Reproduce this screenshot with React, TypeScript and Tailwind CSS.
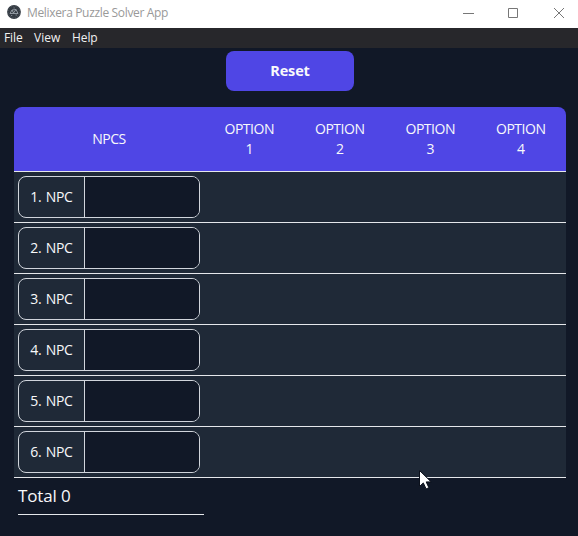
const npcs = [1, 2, 3, 4, 5, 6];
const options = [1, 2, 3, 4];
const columns = "grid grid-cols-[190px_repeat(4,90.5px)]";

function AppIcon() {
  return (
    <svg width="14" height="14" viewBox="0 0 14 14">
      <circle cx="7" cy="7" r="6.9" fill="#343b43" />
      <path d="M3 8.5 5 5l1.5 3L9 4.5l2 4M5 5l4-.5M3 8.5h8M4.2 10.5h1M8.6 10h1.2M6.6 3h1" fill="none" stroke="#a7afb8" strokeWidth=".8" />
      <circle cx="7" cy="7" r="5.9" fill="none" stroke="#68717a" strokeWidth=".6" strokeDasharray="1 1.4" />
    </svg>
  );
}

function TitleBar() {
  return (
    <header className="flex h-7 items-center bg-white pl-[7px] text-[#999]">
      <div className="mb-[4px]"><AppIcon /></div>
      <span className="mb-[3px] ml-[6px] grow text-[12px] tracking-[-0.34px] whitespace-nowrap">Melixera Puzzle Solver App</span>
      <svg className="mb-[3px]" width="116" height="12" viewBox="0 0 116 12" fill="none" stroke="#777">
        <path d="M1 6.5h11" />
        <path d="M46.5 1.5h9v9h-9z" />
        <path d="m92 1 10 10M102 1 92 11" />
      </svg>
    </header>
  );
}

export default function App() {
  return (
    <div className="h-[536px] w-[578px] overflow-hidden bg-[#111827] font-['Open_Sans','Noto_Sans',sans-serif] text-[#f8f9fb]">
      <TitleBar />
      <nav className="flex h-5 items-center bg-[#27272b] pl-1 text-[12px] leading-5 text-[#f1f1f1]">
        <span className="w-[30px] tracking-[-0.1px]">File</span>
        <span className="w-[38px]">View</span>
        <span className="tracking-[-0.1px]">Help</span>
      </nav>
      <main className="px-[14px] pt-[3px]">
        <div className="flex justify-center pl-[2px]">
          <button className="h-10 w-32 rounded-lg bg-[#4f46e5] text-[14.5px] font-bold tracking-[-0.15px]">Reset</button>
        </div>
        <section className="mt-4 w-[552px]">
          <div className={`${columns} h-[65px] items-center rounded-t-lg border-b border-gray-200 bg-[#4f46e5] text-center text-[14px] leading-5 font-medium tracking-[-0.5px]`}>
            <div>NPCS</div>
            {options.map((n) => (
              <div key={n}>OPTION<br />{n}</div>
            ))}
          </div>
          {npcs.map((n) => (
            <div key={n} className={`${columns} h-[51px] border-b border-gray-200 bg-[#1f2937]`}>
              <div className="p-1">
                <label className="flex h-[42px] w-[182px] overflow-hidden rounded-lg border border-gray-300 text-[14px]">
                  <span className="flex w-[66px] shrink-0 items-center justify-center border-r border-gray-300 pb-[2px] font-medium tracking-[-0.3px] [word-spacing:1px] whitespace-nowrap">{n}. NPC</span>
                  <input className="min-w-0 grow bg-[#111827] px-2 outline-none" aria-label={`NPC ${n}`} />
                </label>
              </div>
            </div>
          ))}
          <div className="ml-1 h-[37px] w-[186px] border-b border-gray-200 pt-[4px] text-[17px] leading-7 tracking-[-0.15px]">Total 0</div>
        </section>
      </main>
      <svg className="absolute top-[469px] left-[418px]" width="15" height="22" viewBox="0 0 15 22">
        <path d="M1.5 1.5v16l3.8-3.6 2.8 6 2.8-1.2-2.7-5.8h5z" fill="#fff" stroke="#0b101b" />
      </svg>
    </div>
  );
}
